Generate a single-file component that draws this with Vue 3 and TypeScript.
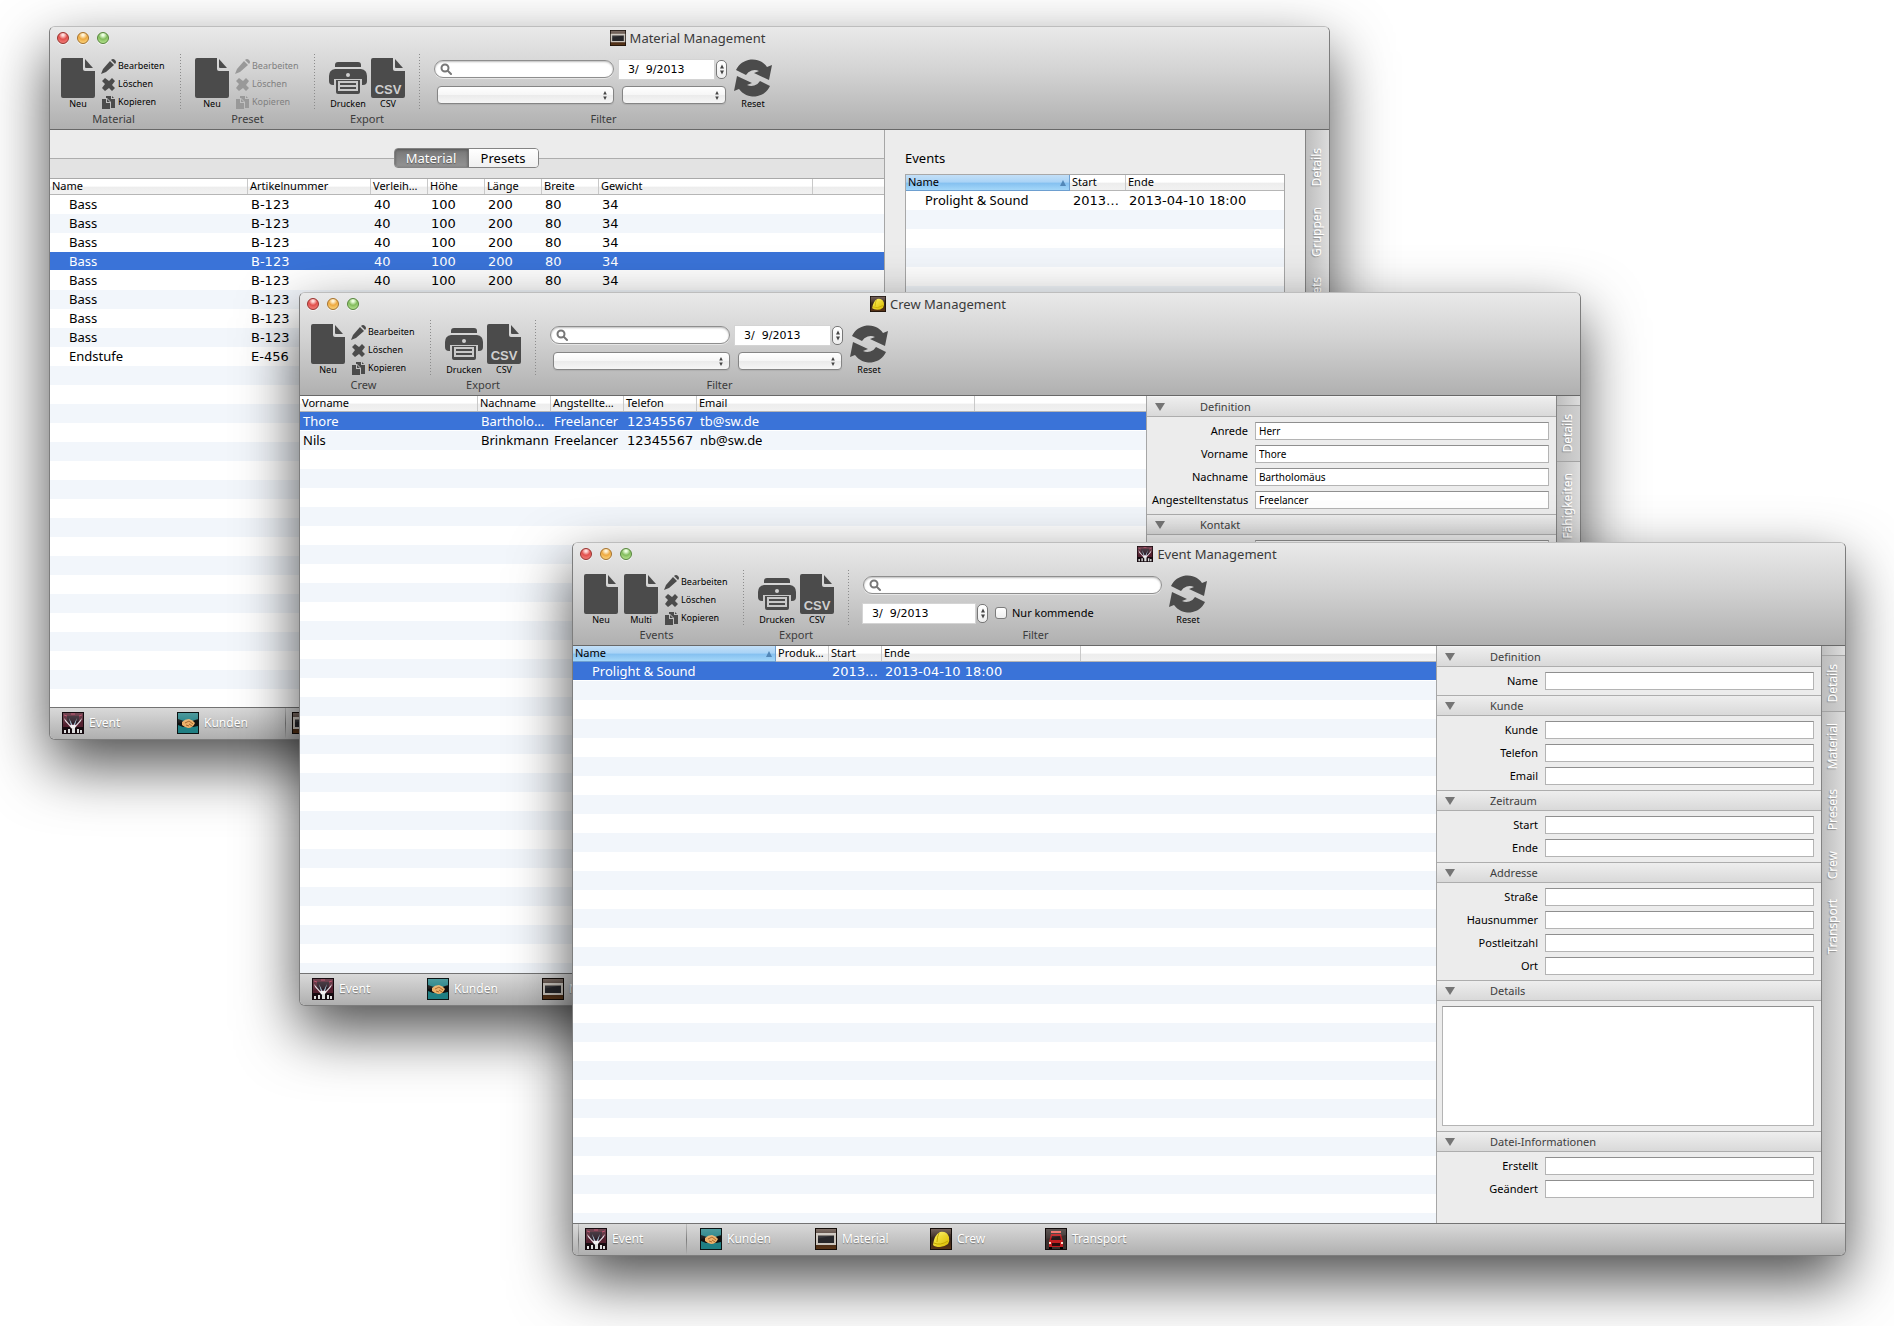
<script setup lang="ts">
type ModuleId = 'event' | 'kunden' | 'material' | 'crew' | 'transport'

interface Column { label: string; width?: number; sorted?: boolean; numeric?: boolean }
interface TableData { columns: Column[]; rows: string[][]; selected: number; indent?: boolean }
interface Field { label: string; value?: string }
interface Section { title: string; fields?: Field[]; area?: boolean }
interface ActionGroup { title: string; big: string[]; disabled?: boolean }
interface AppWindow {
  id: ModuleId
  title: string
  groups: ActionGroup[]
  table: TableData
  sections: Section[]
  events?: TableData
  rail: string[]
  activeTab?: string
}

const stock = ['40', '100', '200', '80', '34', '']

const windows: AppWindow[] = [
  {
    id: 'material',
    title: 'Material Management',
    groups: [
      { title: 'Material', big: ['Neu'] },
      { title: 'Preset', big: ['Neu'], disabled: true },
    ],
    table: {
      columns: [
        { label: 'Name', width: 198 },
        { label: 'Artikelnummer', width: 123, numeric: true },
        { label: 'Verleih…', width: 57, numeric: true },
        { label: 'Höhe', width: 57, numeric: true },
        { label: 'Länge', width: 57, numeric: true },
        { label: 'Breite', width: 57, numeric: true },
        { label: 'Gewicht', width: 214, numeric: true },
        { label: '' },
      ],
      rows: [
        ...Array.from({ length: 8 }, () => ['Bass', 'B-123', ...stock]),
        ['Endstufe', 'E-456', ...stock],
      ],
      selected: 3,
      indent: true,
    },
    sections: [],
    events: {
      columns: [
        { label: 'Name', width: 164, sorted: true },
        { label: 'Start', width: 56, numeric: true },
        { label: 'Ende', numeric: true },
      ],
      rows: [['Prolight & Sound', '2013…', '2013-04-10 18:00']],
      selected: -1,
      indent: true,
    },
    rail: ['Details', 'Gruppen', 'Presets'],
  },
  {
    id: 'crew',
    title: 'Crew Management',
    groups: [{ title: 'Crew', big: ['Neu'] }],
    table: {
      columns: [
        { label: 'Vorname', width: 178 },
        { label: 'Nachname', width: 73 },
        { label: 'Angstellte…', width: 73 },
        { label: 'Telefon', width: 73, numeric: true },
        { label: 'Email', width: 278 },
        { label: '' },
      ],
      rows: [
        ['Thore', 'Bartholo…', 'Freelancer', '12345567', 'tb@sw.de', ''],
        ['Nils', 'Brinkmann', 'Freelancer', '12345567', 'nb@sw.de', ''],
      ],
      selected: 0,
    },
    sections: [
      {
        title: 'Definition',
        fields: [
          { label: 'Anrede', value: 'Herr' },
          { label: 'Vorname', value: 'Thore' },
          { label: 'Nachname', value: 'Bartholomäus' },
          { label: 'Angestelltenstatus', value: 'Freelancer' },
        ],
      },
      { title: 'Kontakt', fields: [{ label: 'Telefon' }] },
    ],
    rail: ['Details', 'Fähigkeiten'],
    activeTab: 'Details',
  },
  {
    id: 'event',
    title: 'Event Management',
    groups: [{ title: 'Events', big: ['Neu', 'Multi'] }],
    table: {
      columns: [
        { label: 'Name', width: 203, sorted: true },
        { label: 'Produk…', width: 53 },
        { label: 'Start', width: 53, numeric: true },
        { label: 'Ende', width: 199, numeric: true },
        { label: '' },
      ],
      rows: [['Prolight & Sound', '', '2013…', '2013-04-10 18:00', '']],
      selected: 0,
      indent: true,
    },
    sections: [
      { title: 'Definition', fields: [{ label: 'Name' }] },
      { title: 'Kunde', fields: [{ label: 'Kunde' }, { label: 'Telefon' }, { label: 'Email' }] },
      { title: 'Zeitraum', fields: [{ label: 'Start' }, { label: 'Ende' }] },
      {
        title: 'Addresse',
        fields: [{ label: 'Straße' }, { label: 'Hausnummer' }, { label: 'Postleitzahl' }, { label: 'Ort' }],
      },
      { title: 'Details', area: true },
      { title: 'Datei-Informationen', fields: [{ label: 'Erstellt' }, { label: 'Geändert' }] },
    ],
    rail: ['Details', 'Material', 'Presets', 'Crew', 'Transport'],
    activeTab: 'Details',
  },
]

const modules: { id: ModuleId; label: string }[] = [
  { id: 'event', label: 'Event' },
  { id: 'kunden', label: 'Kunden' },
  { id: 'material', label: 'Material' },
  { id: 'crew', label: 'Crew' },
  { id: 'transport', label: 'Transport' },
]

const actions = [
  { icon: 'pencil', label: 'Bearbeiten' },
  { icon: 'cross', label: 'Löschen' },
  { icon: 'copy', label: 'Kopieren' },
]

const fieldId = (w: AppWindow, s: Section, f: Field): string => `${w.id}-${s.title}-${f.label}`.toLowerCase()
</script>

<template>
  <svg class="defs" aria-hidden="true">
    <defs>
      <linearGradient id="gloss" x1="0" y1="0" x2="0" y2="1">
        <stop offset="0" stop-color="#fff" stop-opacity=".35" />
        <stop offset="1" stop-color="#fff" stop-opacity=".08" />
      </linearGradient>
      <linearGradient id="helmet" x1="0" y1="0" x2="1" y2="1">
        <stop offset="0" stop-color="#fff45a" />
        <stop offset="1" stop-color="#d8b800" />
      </linearGradient>
      <linearGradient id="wood" x1="0" y1="0" x2="0" y2="1">
        <stop offset="0" stop-color="#5e4a40" />
        <stop offset=".5" stop-color="#33241c" />
        <stop offset="1" stop-color="#5a3416" />
      </linearGradient>
    </defs>
    <symbol id="doc" viewBox="0 0 34 40">
      <path d="M2 0h20v11q0 2 2 2h10v25q0 2-2 2H2q-2 0-2-2V2q0-2 2-2z" />
      <path d="M24 1l8 9h-7q-1 0-1-1z" />
    </symbol>
    <symbol id="printer" viewBox="0 0 38 40">
      <path d="M9 4h20q3 0 3 3v2H6V7q0-3 3-3z" />
      <path d="M6 11h26q6 1 6 7v5q0 4-4 4H4q-4 0-4-4v-5q0-6 6-7z" />
      <circle cx="19" cy="17" r="2" fill="#d0d0d0" />
      <path d="M5 21h28v7H5z" fill="#c9c9c9" />
      <path d="M7 22h24v12q0 2-2 2H9q-2 0-2-2z" />
      <path d="M9 23h20v10H9z" fill="#c9c9c9" />
      <path d="M11 25h16v2H11zM11 29h16v2H11z" />
    </symbol>
    <symbol id="reload" viewBox="0 0 40 40">
      <path d="M3 12A18 18 0 0 1 34 9l5-2-3 15-15-7 5-2A10 10 0 0 0 13 17z" />
      <path d="M3 12A18 18 0 0 1 34 9l5-2-3 15-15-7 5-2A10 10 0 0 0 13 17z" transform="rotate(180 20 20)" />
    </symbol>
    <symbol id="pencil" viewBox="0 0 15 15">
      <path d="M9 2l4 4-8 7-5 2 2-5zM10 1q2-2 4 0t0 4z" />
    </symbol>
    <symbol id="cross" viewBox="0 0 15 15">
      <path d="M1 4l3-3 4 3 3-3 3 3-3 4 3 3-3 3-3-3-4 3-3-3 3-4z" />
    </symbol>
    <symbol id="copy" viewBox="0 0 15 15">
      <path d="M1 4h4v4h4v6H1zM6 4l3 3H6z" />
      <path d="M5 1h5v3h4v9h-4V7L6 3H5zM11 1l2 2h-2z" />
    </symbol>
    <symbol id="lens" viewBox="0 0 12 12">
      <circle cx="5" cy="5" r="3.500" fill="none" stroke="#777" stroke-width="2" />
      <path d="M8 8l3 3" stroke="#777" stroke-width="2" stroke-linecap="round" />
    </symbol>
    <symbol id="updown" viewBox="0 0 6 10">
      <path d="M3 0l2 4H1zM3 10l2-4H1z" fill="#444" />
    </symbol>
    <symbol id="app-event" viewBox="0 0 22 22">
      <path d="M0 0h22v22H0z" fill="#160b10" />
      <path d="M1 1h20v14H1z" fill="#53202f" />
      <path d="M5 4h12v8H5z" fill="#2b1c26" />
      <path d="M2 3l3 1M20 3l-3 1M9 2h4" stroke="#b43a5a" />
      <path d="M2 6l7 8 2 4L3 9zM20 6l-7 8-2 4 8-9z" fill="#e6dbe2" />
      <path d="M7 6l4 8 4-8-3 11h-2z" fill="#a9c6d8" />
      <path d="M8 13h6l-1 3H9z" fill="#f4f0f2" />
      <path d="M2 18h2v3H2zM6 17h2v4H6zM10 16h3v5h-3zM15 17h2v4h-2zM18 18h2v3h-2z" fill="#ddd" />
      <path d="M1 1h20v7L1 12z" fill="url(#gloss)" opacity=".5" />
    </symbol>
    <symbol id="app-kunden" viewBox="0 0 22 22">
      <path d="M0 0h22v22H0z" fill="#0c1414" />
      <path d="M1 1h20v20H1z" fill="#1f7f83" />
      <path d="M1 7l6 2h8l6-2v7l-5 1H6l-5-2z" fill="#101010" />
      <path d="M5 10q3-3 7-3 4 1 6 4-2 5-7 5-4-1-6-3z" fill="#ecb06a" />
      <path d="M8 11l4-2 4 3M9 13l3 1M12 12l3 2" fill="none" stroke="#a8682e" />
      <path d="M1 1h20v7L1 11z" fill="url(#gloss)" opacity=".6" />
    </symbol>
    <symbol id="app-material" viewBox="0 0 22 22">
      <path d="M0 0h22v22H0z" fill="#140d09" />
      <path d="M1 1h20v20H1z" fill="url(#wood)" />
      <path d="M1 5h20v12H1z" fill="#c9c3bb" />
      <path d="M3 7h16v1H3z" fill="#77706a" />
      <path d="M3 8h16v7H3z" fill="#26262a" />
      <path d="M1 1h20v6L1 11z" fill="url(#gloss)" opacity=".6" />
    </symbol>
    <symbol id="app-crew" viewBox="0 0 22 22">
      <path d="M0 0h22v22H0z" fill="#140d09" />
      <path d="M1 1h20v20H1z" fill="url(#wood)" />
      <path d="M3 17Q4 7 10 4q7-1 9 5 1 4-1 7-4 3-8 3-5 0-7-2z" fill="url(#helmet)" />
      <path d="M4 15q6 3 14-2M9 5q-2 4-2 9" fill="none" stroke="#c4a800" />
      <path d="M1 1h20v5L1 9z" fill="url(#gloss)" opacity=".4" />
    </symbol>
    <symbol id="app-transport" viewBox="0 0 22 22">
      <path d="M0 0h22v22H0z" fill="#120c0c" />
      <path d="M1 1h20v20H1z" fill="#3a302e" />
      <path d="M6 3h10v2H6z" fill="#f0675e" />
      <path d="M6 6h10l2 8v5H4v-5z" fill="#c01d20" />
      <path d="M7 8h8l1 4H6z" fill="#25191b" />
      <path d="M7 15h8v3H7z" fill="#2a0c0c" />
      <path d="M4 14h2v2H4zM16 14h2v2h-2z" fill="#ffd9c8" />
      <path d="M4 19h3v2H4zM15 19h3v2h-3z" fill="#000" />
      <path d="M1 1h20v6L1 11z" fill="url(#gloss)" opacity=".5" />
    </symbol>
  </svg>

  <main class="desktop">
    <section v-for="w in windows" :key="w.id" class="window" :class="`window-${w.id}`" :aria-label="w.title">
      <header class="chrome">
        <div class="titlebar">
          <div class="lights">
            <button class="light red" aria-label="Schließen"></button>
            <button class="light amber" aria-label="Minimieren"></button>
            <button class="light green" aria-label="Zoomen"></button>
          </div>
          <svg class="title-icon"><use :href="`#app-${w.id}`" /></svg>
          <h1>{{ w.title }}</h1>
        </div>

        <div class="toolbar">
          <template v-for="g in w.groups" :key="g.title">
            <div class="group">
              <div class="tools">
                <button v-for="b in g.big" :key="b" class="big">
                  <svg class="doc"><use href="#doc" /></svg>
                  <span>{{ b }}</span>
                </button>
                <div class="small-col">
                  <button v-for="a in actions" :key="a.icon" class="small" :disabled="g.disabled">
                    <svg><use :href="`#${a.icon}`" /></svg>{{ a.label }}
                  </button>
                </div>
              </div>
              <div class="caption">{{ g.title }}</div>
            </div>
            <i class="sep"></i>
          </template>

          <div class="group">
            <div class="tools export">
              <button class="big">
                <svg class="printer"><use href="#printer" /></svg>
                <span>Drucken</span>
              </button>
              <button class="big">
                <svg class="doc" viewBox="0 0 34 40">
                  <use href="#doc" />
                  <text x="17" y="36" text-anchor="middle">CSV</text>
                </svg>
                <span>CSV</span>
              </button>
            </div>
            <div class="caption">Export</div>
          </div>
          <i class="sep"></i>

          <div class="group">
            <div class="tools filter">
              <div class="controls">
                <div class="line">
                  <div class="search">
                    <svg><use href="#lens" /></svg>
                    <input type="search" aria-label="Suche" />
                  </div>
                  <template v-if="w.id !== 'event'">
                    <input class="date" type="text" value="3/  9/2013" aria-label="Datum" />
                    <button class="stepper" aria-label="Datum ändern"><svg><use href="#updown" /></svg></button>
                  </template>
                </div>
                <div v-if="w.id !== 'event'" class="line popups">
                  <div class="popup wide">
                    <select aria-label="Kategorie"></select>
                    <svg><use href="#updown" /></svg>
                  </div>
                  <div class="popup">
                    <select aria-label="Status"></select>
                    <svg><use href="#updown" /></svg>
                  </div>
                </div>
                <div v-else class="line second">
                  <input class="date" type="text" value="3/  9/2013" aria-label="Datum" />
                  <button class="stepper" aria-label="Datum ändern"><svg><use href="#updown" /></svg></button>
                  <label class="check"><input type="checkbox" />Nur kommende</label>
                </div>
              </div>
              <button class="big">
                <svg class="reload"><use href="#reload" /></svg>
                <span>Reset</span>
              </button>
            </div>
            <div class="caption">Filter</div>
          </div>
        </div>
      </header>

      <div class="body">
        <div class="pane">
          <div v-if="w.events" class="switcher">
            <div class="segments">
              <button class="on">Material</button>
              <button>Presets</button>
            </div>
          </div>
          <div class="list">
            <table>
              <colgroup>
                <col v-for="(c, i) in w.table.columns" :key="i" :style="c.width ? { width: c.width + 'px' } : {}" />
              </colgroup>
              <thead>
                <tr>
                  <th v-for="(c, i) in w.table.columns" :key="i" :class="{ sorted: c.sorted }">
                    <span>{{ c.label }}</span><i v-if="c.sorted" class="arrow"></i>
                  </th>
                </tr>
              </thead>
              <tbody>
                <tr v-for="(r, ri) in w.table.rows" :key="ri" :class="{ selected: ri === w.table.selected }">
                  <td
                    v-for="(c, ci) in w.table.columns"
                    :key="ci"
                    :class="{ numeric: c.numeric, indent: ci === 0 && w.table.indent }"
                  >{{ r[ci] }}</td>
                </tr>
              </tbody>
            </table>
          </div>
        </div>

        <aside class="inspector">
          <div v-if="w.events" class="events">
            <h2>Events</h2>
            <div class="list framed">
              <table>
                <colgroup>
                  <col v-for="(c, i) in w.events.columns" :key="i" :style="c.width ? { width: c.width + 'px' } : {}" />
                </colgroup>
                <thead>
                  <tr>
                    <th v-for="c in w.events.columns" :key="c.label" :class="{ sorted: c.sorted }">
                      <span>{{ c.label }}</span><i v-if="c.sorted" class="arrow"></i>
                    </th>
                  </tr>
                </thead>
                <tbody>
                  <tr v-for="(r, ri) in w.events.rows" :key="ri">
                    <td
                      v-for="(c, ci) in w.events.columns"
                      :key="ci"
                      :class="{ numeric: c.numeric, indent: ci === 0 }"
                    >{{ r[ci] }}</td>
                  </tr>
                </tbody>
              </table>
            </div>
          </div>
          <section v-for="s in w.sections" :key="s.title" class="section">
            <h2><i class="twisty"></i>{{ s.title }}</h2>
            <div class="fields">
              <textarea v-if="s.area" :aria-label="s.title"></textarea>
              <div v-for="f in s.fields" :key="f.label" class="field">
                <label :for="fieldId(w, s, f)">{{ f.label }}</label>
                <input :id="fieldId(w, s, f)" type="text" :value="f.value" />
              </div>
            </div>
          </section>
        </aside>

        <nav class="rail">
          <button v-for="t in w.rail" :key="t" :class="{ active: t === w.activeTab }"><span>{{ t }}</span></button>
        </nav>
      </div>

      <footer class="modules">
        <a v-for="m in modules" :key="m.id" href="#" :class="{ active: m.id === w.id }">
          <svg><use :href="`#app-${m.id}`" /></svg>{{ m.label }}
        </a>
      </footer>
    </section>
  </main>
</template>

<style>
body {
  margin: 0;
  background: #fff;
}
</style>

<style scoped>
* {
  box-sizing: border-box;
}
.defs {
  position: absolute;
  width: 0;
  height: 0;
}
.desktop {
  position: relative;
  min-height: 100vh;
  overflow: hidden;
  font-family: "Lucida Grande", "Noto Sans", "Open Sans", sans-serif;
  font-size: 11px;
  color: #000;
}
button,
input,
select,
textarea {
  margin: 0;
  padding: 0;
  border: 0;
  background: none;
  color: inherit;
  font: inherit;
  outline: 0;
}
svg {
  display: block;
  flex: none;
}

/* windows */
.window {
  position: absolute;
  display: flex;
  flex-direction: column;
  min-height: 714px;
  border: 1px solid #7d7d7d;
  border-top-color: #bdbdbd;
  border-radius: 6px;
  background: #ececec;
  box-shadow: 0 25px 60px rgba(0, 0, 0, 0.7);
  overflow: hidden;
}
.window-material {
  top: 26px;
  left: 49px;
  right: 564px;
}
.window-crew {
  top: 292px;
  left: 299px;
  right: 313px;
}
.window-event {
  top: 542px;
  left: 572px;
  right: 48px;
}
.chrome {
  flex: none;
  border-bottom: 1px solid #686868;
  background: linear-gradient(#e9e9e9, #d2d2d2 45%, #b0b0b0);
}
.titlebar {
  position: relative;
  display: flex;
  align-items: center;
  justify-content: center;
  gap: 4px;
  height: 27px;
  padding: 0 4px 6px 0;
}
.titlebar h1 {
  margin: 0;
  font-size: 13px;
  font-weight: 400;
  line-height: 16px;
  color: #3a3a3a;
}
.title-icon {
  width: 16px;
  height: 16px;
}
.lights {
  position: absolute;
  top: 5px;
  left: 7px;
  display: flex;
  gap: 8px;
}
.light {
  width: 12px;
  height: 12px;
  border-radius: 50%;
  box-shadow: 0 1px 0 rgba(255, 255, 255, 0.6);
}
.red {
  border: 1px solid #97302c;
  background: radial-gradient(circle at 50% 20%, #ffdcda 0 10%, #e2514d 45%, #f58c88);
}
.amber {
  border: 1px solid #a5712a;
  background: radial-gradient(circle at 50% 20%, #fff3d6 0 10%, #eeaa41 45%, #ffe290);
}
.green {
  border: 1px solid #55843a;
  background: radial-gradient(circle at 50% 20%, #ecffdf 0 10%, #83bd5d 45%, #c7f0a0);
}

/* toolbar */
.toolbar {
  display: flex;
  padding: 0 11px 2px;
}
.tools {
  display: flex;
  gap: 6px;
  height: 57px;
}
.tools.export {
  gap: 4px;
}
.caption {
  font-size: 11px;
  line-height: 16px;
  text-align: center;
  color: #3c3c3c;
}
.sep {
  width: 1px;
  height: 57px;
  margin: 0 14px;
  background: repeating-linear-gradient(#8c8c8c 0, #8c8c8c 1px, transparent 1px, transparent 3px);
}
.big {
  display: flex;
  flex-direction: column;
  align-items: center;
  padding-top: 4px;
  font-size: 9px;
  line-height: 12px;
}
.big svg {
  height: 40px;
  fill: #4b4b4b;
}
.doc {
  width: 34px;
}
.doc text {
  font: bold 13px "Liberation Sans", sans-serif;
  fill: #cfcfcf;
}
.printer {
  width: 38px;
}
.reload {
  width: 40px;
}
.small-col {
  width: 65px;
  padding-top: 3px;
}
.small {
  display: flex;
  align-items: center;
  gap: 2px;
  height: 18px;
  font-size: 9px;
  line-height: 12px;
}
.small svg {
  width: 15px;
  height: 15px;
  fill: #4b4b4b;
}
.small:disabled {
  color: #808080;
}
.small:disabled svg {
  fill: #999;
}
.controls {
  display: flex;
  flex-direction: column;
  gap: 8px;
  padding-top: 6px;
}
.line {
  display: flex;
  align-items: center;
  height: 18px;
}
.search {
  display: flex;
  align-items: center;
  gap: 4px;
  width: 180px;
  height: 18px;
  padding: 0 5px;
  border: 1px solid #8e8e8e;
  border-radius: 9px;
  background: #fff;
  box-shadow: inset 0 1px 2px #bbb, 0 1px 0 #e6e6e6;
}
.window-event .search {
  width: 299px;
}
.search svg {
  width: 12px;
  height: 12px;
}
.search input {
  flex: 1;
  min-width: 0;
}
.date {
  width: 95px;
  height: 19px;
  margin: 0 2px 0 5px;
  padding-left: 9px;
  background: #fff;
  box-shadow: 0 0 0 1px #d4d4d4;
  font-family: "DejaVu Sans", sans-serif;
  font-size: 11px;
  white-space: pre;
}
.stepper {
  display: grid;
  place-items: center;
  width: 11px;
  height: 19px;
  border: 1px solid #777;
  border-radius: 5px;
  background: linear-gradient(#fff, #eee);
}
.stepper svg {
  width: 6px;
  height: 11px;
}
.popup {
  position: relative;
  width: 104px;
  margin-left: 8px;
}
.popup.wide {
  width: 177px;
  margin-left: 3px;
}
.popup select {
  display: block;
  width: 100%;
  height: 18px;
  border: 1px solid #858585;
  border-radius: 4px;
  background: linear-gradient(#fff, #f6f6f6 50%, #ebebeb 51%, #f6f6f6);
  box-shadow: 0 1px 1px #b0b0b0;
  appearance: none;
}
.popup svg {
  position: absolute;
  top: 5px;
  right: 6px;
  width: 6px;
  height: 9px;
  pointer-events: none;
}
.second {
  margin-top: 2px;
}
.second .date {
  width: 112px;
  margin-left: 0;
}
.check {
  display: flex;
  align-items: center;
  gap: 5px;
  margin-left: 7px;
  line-height: 16px;
}
.check input {
  width: 12px;
  height: 12px;
  border: 1px solid #7c7c7c;
  border-radius: 3px;
  background: linear-gradient(#fff, #eee);
  appearance: none;
}

/* body */
.body {
  display: flex;
  flex: 1;
}
.pane {
  display: flex;
  flex: 1;
  flex-direction: column;
  min-width: 0;
  border-right: 1px solid #a6a6a6;
}
.switcher {
  display: flex;
  align-items: center;
  justify-content: center;
  height: 49px;
  padding: 15px 2px 8px 0;
  border-bottom: 1px solid #a9a9a9;
  background: linear-gradient(#ececec 28px, #adadad 28px, #adadad 29px, #e3e3e3 29px);
}
.segments {
  display: flex;
  height: 20px;
  border: 1px solid #848484;
  border-radius: 4px;
  overflow: hidden;
}
.segments button {
  width: 69px;
  background: linear-gradient(#fff, #f0f0f0);
  font-size: 13px;
  line-height: 18px;
}
.segments .on {
  width: 74px;
  border-right: 1px solid #707070;
  background: linear-gradient(#777, #949494);
  box-shadow: inset 0 1px 3px #555;
  color: #fff;
  text-shadow: 0 1px 1px #555;
}
.list {
  flex: 1;
  background: repeating-linear-gradient(#fff 0, #fff 19px, #f2f6fb 19px, #f2f6fb 38px) 0 16px;
}
.framed {
  border: 1px solid #a8a8a8;
  border-bottom: 0;
}
table {
  width: 100%;
  border-collapse: collapse;
  table-layout: fixed;
}
th {
  position: relative;
  height: 16px;
  padding: 0 2px 2px;
  background: linear-gradient(#fff, #fff 45%, #ededed 50%, #f2f2f2);
  box-shadow: inset 0 -1px 0 #b6b6b6, inset -1px 0 0 #c9c9c9;
  font-size: 11px;
  font-weight: 400;
  line-height: 14px;
  text-align: left;
  white-space: nowrap;
  overflow: hidden;
}
th:last-child {
  box-shadow: inset 0 -1px 0 #b6b6b6;
}
th.sorted {
  background: linear-gradient(#c3dff7, #a9d3f6 45%, #84c0f0 50%, #a8dafa);
  box-shadow: inset 0 -1px 0 #6d9fd0, inset -1px 0 0 #6d9fd0;
}
.arrow {
  position: absolute;
  top: 5px;
  right: 4px;
  border: 3px solid transparent;
  border-top: 0;
  border-bottom: 6px solid #5287b8;
}
td {
  height: 19px;
  padding: 0 0 0 3px;
  font-size: 13px;
  line-height: 18px;
  vertical-align: baseline;
  white-space: nowrap;
  overflow: hidden;
}
td.numeric {
  font-family: "Lucida Grande", "DejaVu Sans", sans-serif;
}
td.indent {
  padding-left: 19px;
}
.selected td {
  background: #3a73d8;
  box-shadow: inset 0 -1px 0 #fff;
  color: #fff;
}

/* inspector */
.inspector {
  display: flex;
  flex: none;
  flex-direction: column;
  width: 384px;
}
.window-material .inspector {
  width: 420px;
}
.window-crew .inspector {
  width: 409px;
}
.events {
  display: flex;
  flex: 1;
  flex-direction: column;
  padding: 19px 20px 0;
}
.events h2 {
  margin: 0;
  padding-bottom: 7px;
  font-size: 13px;
  font-weight: 400;
  line-height: 18px;
}
.section h2 {
  display: flex;
  align-items: center;
  height: 21px;
  margin: 0;
  padding-left: 8px;
  border: solid #adadad;
  border-width: 1px 0;
  background: linear-gradient(#eeeeee, #d9d9d9);
  font-size: 11px;
  font-weight: 400;
  line-height: 16px;
  color: #3d3d3d;
}
.section:first-child h2 {
  border-top-color: #f4f4f4;
}
.twisty {
  margin-right: 35px;
  border: 5px solid transparent;
  border-top: 8px solid #757575;
  border-bottom: 0;
}
.fields {
  display: flex;
  flex-direction: column;
  gap: 5px;
  padding: 5px 7px 5px 5px;
}
.field {
  display: flex;
  align-items: center;
  gap: 7px;
}
.field label {
  width: 96px;
  line-height: 16px;
  text-align: right;
  white-space: nowrap;
}
.field input {
  flex: 1;
  min-width: 0;
  height: 18px;
  padding: 0 3px;
  font-size: 10px;
}
.field input,
textarea {
  border: 1px solid #b4b4b4;
  border-top-color: #8f8f8f;
  background: #fff;
}
textarea {
  height: 120px;
  resize: none;
}

/* rail */
.rail {
  display: flex;
  flex: none;
  flex-direction: column;
  align-items: stretch;
  gap: 2px;
  width: 24px;
  padding-top: 9px;
  border-left: 1px solid #838383;
  background: linear-gradient(90deg, #bebebe, #dcdcdc);
}
.rail button {
  display: flex;
  align-items: center;
  justify-content: center;
  padding: 8px 2px 8px 0;
  border: solid transparent;
  border-width: 1px 0;
}
.rail .active {
  border-color: #a2a2a2;
  background: linear-gradient(90deg, #bdbdbd, #cfcfcf);
}
.rail span {
  writing-mode: vertical-rl;
  transform: rotate(180deg);
  font-size: 12px;
  line-height: 16px;
  color: #fff;
  text-shadow: -1px -1px 1px #8f8f8f;
}

/* footer */
.modules {
  display: flex;
  flex: none;
  gap: 6px;
  height: 32px;
  padding: 0 5px;
  border-top: 1px solid #737373;
  background: linear-gradient(#d9d9d9, #afafaf);
}
.modules a {
  display: flex;
  align-items: center;
  gap: 5px;
  width: 109px;
  padding: 0 0 2px 6px;
  border: solid transparent;
  border-width: 0 1px;
  font-size: 12px;
  line-height: 16px;
  color: #fff;
  text-decoration: none;
  text-shadow: 0 1px 1px #777;
}
.modules .active {
  border-image: linear-gradient(#c4c4c4, #7c7c7c, #b4b4b4) 1;
}
.modules svg {
  width: 22px;
  height: 22px;
}
</style>
